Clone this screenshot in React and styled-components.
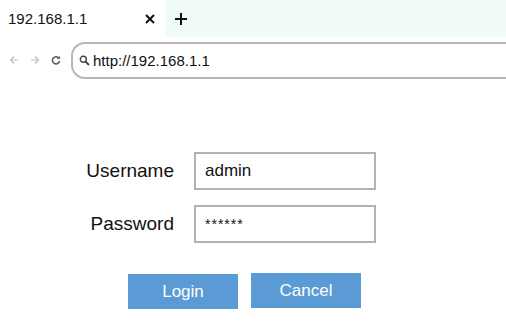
import styled, { createGlobalStyle } from "styled-components";

const GlobalStyle = createGlobalStyle`
    html, body {
        margin: 0;
        padding: 0;
        background: #fff;
        font-family: "Liberation Sans", Arial, sans-serif;
        color: #111;
    }
`

const App = () => {
    return (
        <Page>
            <GlobalStyle />
            <TabBar>
                <Tab>
                    <TabTitle>192.168.1.1</TabTitle>
                    <TabClose>
                        <svg width="10" height="10" viewBox="0 0 10 10">
                            <path d="M1 1 L9 9 M9 1 L1 9" stroke="#111" strokeWidth="2" />
                        </svg>
                    </TabClose>
                </Tab>
                <NewTab>
                    <svg width="12" height="12" viewBox="0 0 12 12">
                        <path d="M6 0 V12 M0 6 H12" stroke="#111" strokeWidth="2" />
                    </svg>
                </NewTab>
            </TabBar>
            <AddressRow>
                <NavIcons>
                    <NavIcon>
                        <svg width="10" height="10" viewBox="0 0 10 10">
                            <path d="M9 5 H1.5 M5 1.5 L1.5 5 L5 8.5" stroke="#bdbdbd" strokeWidth="1.2" fill="none" />
                        </svg>
                    </NavIcon>
                    <NavIcon>
                        <svg width="10" height="10" viewBox="0 0 10 10">
                            <path d="M1 5 H8.5 M5 1.5 L8.5 5 L5 8.5" stroke="#bdbdbd" strokeWidth="1.2" fill="none" />
                        </svg>
                    </NavIcon>
                    <NavIcon>
                        <svg width="10" height="10" viewBox="0 0 10 10">
                            <path d="M8 3.2 A3.6 3.6 0 1 0 8.6 6" stroke="#555" strokeWidth="1.5" fill="none" />
                            <path d="M8.8 1 V4 H5.8" fill="#555" />
                        </svg>
                    </NavIcon>
                </NavIcons>
                <AddressBox>
                    <svg width="11" height="11" viewBox="0 0 11 11">
                        <circle cx="4.3" cy="4.3" r="3" stroke="#444" strokeWidth="1.4" fill="none" />
                        <path d="M6.5 6.5 L10 10" stroke="#444" strokeWidth="1.8" />
                    </svg>
                    <Url>http://192.168.1.1</Url>
                </AddressBox>
            </AddressRow>
            <Content>
                <Form>
                    <Label>Username</Label>
                    <Field>admin</Field>
                    <Label>Password</Label>
                    <Field $secret>******</Field>
                </Form>
                <Buttons>
                    <Button>Login</Button>
                    <Button $raise>Cancel</Button>
                </Buttons>
            </Content>
        </Page>
    )
}

export default App;

const Page = styled.div`
    width: 506px;
    height: 327px;
    overflow: hidden;
`

const TabBar = styled.div`
    display: flex;
    height: 37px;
    background: #f1fbfa;
`

const Tab = styled.div`
    width: 165px;
    background: #fff;
    display: flex;
    align-items: center;
    justify-content: space-between;
    padding: 0 10px 0 8px;
    box-sizing: border-box;
`

const TabTitle = styled.span`
    font-size: 15px;
`

const TabClose = styled.span`
    display: flex;
    margin-top: 1px;
`

const NewTab = styled.span`
    display: flex;
    align-items: center;
    padding-left: 10px;
`

const AddressRow = styled.div`
    display: flex;
    align-items: flex-start;
    padding-top: 5px;
    height: 43px;
    box-sizing: border-box;
`

const NavIcons = styled.div`
    display: flex;
    gap: 11px;
    padding: 13px 0 0 9px;
    width: 71px;
    box-sizing: border-box;
`

const NavIcon = styled.span`
    display: flex;
`

const AddressBox = styled.div`
    flex: 1;
    height: 37px;
    box-sizing: border-box;
    border: 2px solid #b9b6b6;
    border-right: none;
    border-radius: 14px 0 0 14px;
    display: flex;
    align-items: center;
    gap: 3px;
    padding-left: 6px;
`

const Url = styled.span`
    font-size: 15px;
    color: #111;
`

const Content = styled.div`
    padding-top: 72px;
`

const Form = styled.div`
    display: grid;
    grid-template-columns: 174px 182px;
    column-gap: 20px;
    row-gap: 15px;
    align-items: center;
`

const Label = styled.div`
    text-align: right;
    font-size: 19px;
`

const Field = styled.div`
    height: 38px;
    box-sizing: border-box;
    border: 2px solid #b3b1b1;
    display: flex;
    align-items: center;
    padding-left: 9px;
    font-size: ${p => (p.$secret ? "14px" : "17px")};
    letter-spacing: ${p => (p.$secret ? "1px" : "0")};
`

const Buttons = styled.div`
    display: flex;
    gap: 13px;
    padding: 31px 0 0 128px;
    align-items: flex-start;
`

const Button = styled.div`
    width: 110px;
    height: 35px;
    background: #5b9bd5;
    color: #fff;
    font-size: 17px;
    display: flex;
    align-items: center;
    justify-content: center;
    margin-top: ${p => (p.$raise ? "-1px" : "0")};
`
